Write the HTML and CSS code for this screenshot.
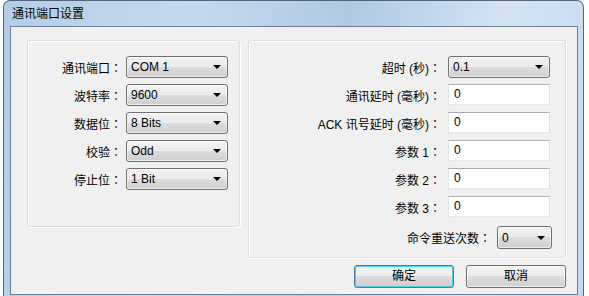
FILE: index.html
```html
<!DOCTYPE html>
<html lang="zh-CN">
<head>
  <meta charset="UTF-8" />
  <title>通讯端口设置</title>
  <link rel="stylesheet" href="styles.css">
</head>
<body>
  <div class="window">
    <div class="titlebar">通讯端口设置</div>
    <div class="client">
      <div class="groups">
        <div class="group group-left">
          <div class="row"><span class="label">通讯端口<span class="colon" lang="zh-TW">：</span></span><div class="combo"><span>COM 1</span><i class="arrow"></i></div></div>
          <div class="row"><span class="label">波特率<span class="colon" lang="zh-TW">：</span></span><div class="combo"><span>9600</span><i class="arrow"></i></div></div>
          <div class="row"><span class="label">数据位<span class="colon" lang="zh-TW">：</span></span><div class="combo"><span>8 Bits</span><i class="arrow"></i></div></div>
          <div class="row"><span class="label">校验<span class="colon" lang="zh-TW">：</span></span><div class="combo"><span>Odd</span><i class="arrow"></i></div></div>
          <div class="row"><span class="label">停止位<span class="colon" lang="zh-TW">：</span></span><div class="combo"><span>1 Bit</span><i class="arrow"></i></div></div>
        </div>
        <div class="group group-right">
          <div class="row"><span class="label">超时 (秒)<span class="colon" lang="zh-TW">：</span></span><div class="combo"><span>0.1</span><i class="arrow"></i></div></div>
          <div class="row"><span class="label">通讯延时 (毫秒)<span class="colon" lang="zh-TW">：</span></span><div class="textbox">0</div></div>
          <div class="row"><span class="label">ACK 讯号延时 (毫秒)<span class="colon" lang="zh-TW">：</span></span><div class="textbox">0</div></div>
          <div class="row"><span class="label">参数 1<span class="colon" lang="zh-TW">：</span></span><div class="textbox">0</div></div>
          <div class="row"><span class="label">参数 2<span class="colon" lang="zh-TW">：</span></span><div class="textbox">0</div></div>
          <div class="row"><span class="label">参数 3<span class="colon" lang="zh-TW">：</span></span><div class="textbox">0</div></div>
          <div class="row row-retry"><span class="label">命令重送次数<span class="colon" lang="zh-TW">：</span></span><div class="combo combo-small"><span>0</span><i class="arrow"></i></div></div>
        </div>
      </div>
      <div class="buttons">
        <div class="button button-default">确定</div>
        <div class="button">取消</div>
      </div>
    </div>
  </div>
</body>
</html>
```

FILE: styles.css
```css
body {
  margin: 0;
  background: #ffffff;
  font-family: "Liberation Sans", "Noto Sans CJK SC", sans-serif;
  font-size: 12px;
  color: #000000;
}

.window {
  margin-left: 3px;
  width: 581px;
  height: 296px;
  box-sizing: border-box;
  border: 1px solid #55657a;
  border-bottom: none;
  border-radius: 7px 7px 0 0;
  padding: 0 5px 1px 6px;
  background: linear-gradient(100deg, #b4cde8 0%, #c4d9ee 30%, #afc9e5 55%, #d3e3f4 80%, #c4d9ef 100%);
  display: flex;
  flex-direction: column;
}

.titlebar {
  height: 25px;
  line-height: 26px;
  padding-left: 2px;
  color: #000000;
}

.client {
  flex: 1;
  background: #f0f0f0;
  border: 1px solid #6c8198;
  padding: 13px 0 0 16px;
}

.groups {
  display: flex;
  align-items: flex-start;
  gap: 8px;
}

.group {
  box-sizing: border-box;
  border: 1px solid #d5dfe5;
  border-radius: 3px;
  box-shadow: inset 1px 1px 0 #ffffff, 1px 1px 0 #ffffff;
  display: flex;
  flex-direction: column;
  gap: 6px;
}

.group-left {
  width: 213px;
  height: 187px;
  padding: 15px 11px 0 0;
}

.group-right {
  width: 318px;
  height: 218px;
  padding: 15px 15px 0 0;
}

.row {
  display: flex;
  align-items: center;
  height: 22px;
  gap: 4px;
}

.group-right .row {
  gap: 7px;
}

.label {
  flex: 1;
  text-align: right;
  white-space: nowrap;
}

.colon {
  font-family: "Noto Sans CJK TC", sans-serif;
}

.combo {
  box-sizing: border-box;
  width: 102px;
  height: 22px;
  border: 1px solid #707070;
  border-radius: 3px;
  background: linear-gradient(#f2f2f2 0%, #ebebeb 50%, #dddddd 50%, #cfcfcf 100%);
  box-shadow: inset 0 0 0 1px rgba(255, 255, 255, 0.6);
  display: flex;
  align-items: center;
  justify-content: space-between;
  padding: 0 6px 0 4px;
}

.arrow {
  width: 0;
  height: 0;
  border-left: 4px solid transparent;
  border-right: 4px solid transparent;
  border-top: 4px solid #000000;
}

.textbox {
  box-sizing: border-box;
  width: 102px;
  height: 21px;
  background: #ffffff;
  border: 1px solid;
  border-color: #abadb3 #dbdfe6 #e3e9ef #e2e3ea;
  padding-left: 5px;
  line-height: 19px;
  align-self: flex-start;
}

.row-retry {
  margin-top: 2px;
  height: 23px;
}

.group-right .row-retry {
  gap: 6px;
}

.combo-small {
  width: 55px;
  height: 23px;
  margin-right: -2px;
}

.buttons {
  width: 539px;
  margin-top: 7px;
  display: flex;
  justify-content: flex-end;
  gap: 12px;
}

.button {
  box-sizing: border-box;
  width: 100px;
  height: 23px;
  border: 1px solid #707070;
  border-radius: 3px;
  background: linear-gradient(#f2f2f2 0%, #ebebeb 50%, #dddddd 50%, #cfcfcf 100%);
  box-shadow: inset 0 0 0 1px rgba(255, 255, 255, 0.7);
  text-align: center;
  line-height: 21px;
}

.button-default {
  border-color: #3c7fb1;
  box-shadow: inset 0 0 0 1px #48d0f5;
}
```
